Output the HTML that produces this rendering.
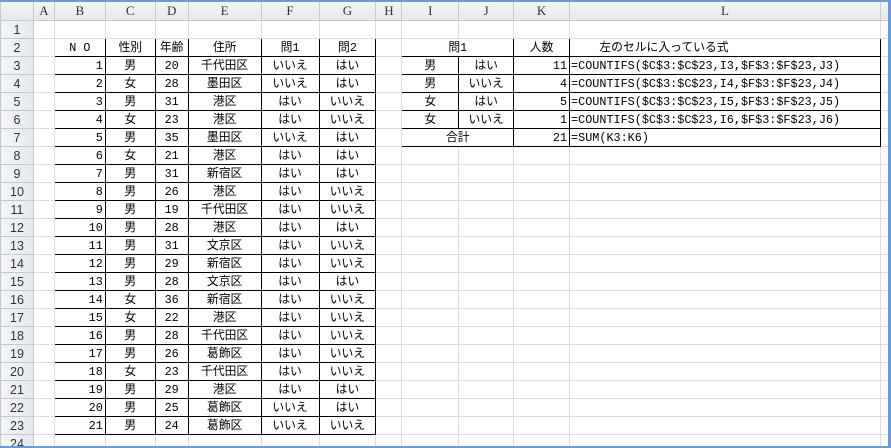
<!DOCTYPE html>
<html><head><meta charset="utf-8"><style>
*{margin:0;padding:0;box-sizing:border-box}
html,body{width:891px;height:448px;overflow:hidden}
body{background:#fff;position:relative;font-family:"Liberation Mono","Noto Sans CJK JP",monospace;font-size:11.8px;color:#000}
table{border-collapse:collapse;table-layout:fixed;position:absolute;left:0;top:0}
td{height:18px;border:1px solid #dadcdd;padding:0 2px;white-space:nowrap;overflow:hidden;line-height:16px;text-align:center}
tr.h td{height:20px;background:linear-gradient(#f4f6f8,#e4e8ed);border-color:#c5c9cf;color:#333;font-family:"Liberation Serif",serif;font-size:13px}
td.rh{background:linear-gradient(90deg,#f4f6f8,#e4e8ed);border-color:#c5c9cf;color:#333;text-align:center;font-family:"Liberation Sans",sans-serif;font-size:12.5px}
td.b{border:1px solid #000}
td.r{text-align:right}
td.l{text-align:left;padding-left:1px}
#frame{position:absolute;left:0;top:0;width:891px;height:448px;border-top:2px solid #6d9ad0;border-right:3px solid #6d9ad0;border-bottom:2px solid #6d9ad0;pointer-events:none}
</style></head><body>
<table>
<colgroup><col style="width:33px"><col style="width:21px"><col style="width:51px"><col style="width:50px"><col style="width:33px"><col style="width:73px"><col style="width:58px"><col style="width:57px"><col style="width:26px"><col style="width:57px"><col style="width:55px"><col style="width:56px"><col style="width:311px"><col style="width:10px"></colgroup>
<tr class="h"><td></td><td>A</td><td>B</td><td>C</td><td>D</td><td>E</td><td>F</td><td>G</td><td>H</td><td>I</td><td>J</td><td>K</td><td>L</td><td></td></tr>
<tr><td class="rh">1</td><td></td><td></td><td></td><td></td><td></td><td></td><td></td><td></td><td></td><td></td><td></td><td></td><td></td></tr>
<tr><td class="rh">2</td><td></td><td class="b">N O</td><td class="b">性別</td><td class="b">年齢</td><td class="b">住所</td><td class="b">問1</td><td class="b">問2</td><td></td><td class="b" colspan="2">問1</td><td class="b">人数</td><td class="b l">&nbsp;&nbsp;&nbsp;&nbsp;左のセルに入っている式</td><td></td></tr>
<tr><td class="rh">3</td><td></td><td class="b r">1</td><td class="b">男</td><td class="b">20</td><td class="b">千代田区</td><td class="b">いいえ</td><td class="b">はい</td><td></td><td class="b">男</td><td class="b">はい</td><td class="b r">11</td><td class="b l">=COUNTIFS($C$3:$C$23,I3,$F$3:$F$23,J3)</td><td></td></tr>
<tr><td class="rh">4</td><td></td><td class="b r">2</td><td class="b">女</td><td class="b">28</td><td class="b">墨田区</td><td class="b">いいえ</td><td class="b">はい</td><td></td><td class="b">男</td><td class="b">いいえ</td><td class="b r">4</td><td class="b l">=COUNTIFS($C$3:$C$23,I4,$F$3:$F$23,J4)</td><td></td></tr>
<tr><td class="rh">5</td><td></td><td class="b r">3</td><td class="b">男</td><td class="b">31</td><td class="b">港区</td><td class="b">はい</td><td class="b">いいえ</td><td></td><td class="b">女</td><td class="b">はい</td><td class="b r">5</td><td class="b l">=COUNTIFS($C$3:$C$23,I5,$F$3:$F$23,J5)</td><td></td></tr>
<tr><td class="rh">6</td><td></td><td class="b r">4</td><td class="b">女</td><td class="b">23</td><td class="b">港区</td><td class="b">はい</td><td class="b">いいえ</td><td></td><td class="b">女</td><td class="b">いいえ</td><td class="b r">1</td><td class="b l">=COUNTIFS($C$3:$C$23,I6,$F$3:$F$23,J6)</td><td></td></tr>
<tr><td class="rh">7</td><td></td><td class="b r">5</td><td class="b">男</td><td class="b">35</td><td class="b">墨田区</td><td class="b">いいえ</td><td class="b">はい</td><td></td><td class="b" colspan="2">合計</td><td class="b r">21</td><td class="b l">=SUM(K3:K6)</td><td></td></tr>
<tr><td class="rh">8</td><td></td><td class="b r">6</td><td class="b">女</td><td class="b">21</td><td class="b">港区</td><td class="b">はい</td><td class="b">はい</td><td></td><td></td><td></td><td></td><td></td><td></td></tr>
<tr><td class="rh">9</td><td></td><td class="b r">7</td><td class="b">男</td><td class="b">31</td><td class="b">新宿区</td><td class="b">はい</td><td class="b">はい</td><td></td><td></td><td></td><td></td><td></td><td></td></tr>
<tr><td class="rh">10</td><td></td><td class="b r">8</td><td class="b">男</td><td class="b">26</td><td class="b">港区</td><td class="b">はい</td><td class="b">いいえ</td><td></td><td></td><td></td><td></td><td></td><td></td></tr>
<tr><td class="rh">11</td><td></td><td class="b r">9</td><td class="b">男</td><td class="b">19</td><td class="b">千代田区</td><td class="b">はい</td><td class="b">いいえ</td><td></td><td></td><td></td><td></td><td></td><td></td></tr>
<tr><td class="rh">12</td><td></td><td class="b r">10</td><td class="b">男</td><td class="b">28</td><td class="b">港区</td><td class="b">はい</td><td class="b">はい</td><td></td><td></td><td></td><td></td><td></td><td></td></tr>
<tr><td class="rh">13</td><td></td><td class="b r">11</td><td class="b">男</td><td class="b">31</td><td class="b">文京区</td><td class="b">はい</td><td class="b">いいえ</td><td></td><td></td><td></td><td></td><td></td><td></td></tr>
<tr><td class="rh">14</td><td></td><td class="b r">12</td><td class="b">男</td><td class="b">29</td><td class="b">新宿区</td><td class="b">はい</td><td class="b">いいえ</td><td></td><td></td><td></td><td></td><td></td><td></td></tr>
<tr><td class="rh">15</td><td></td><td class="b r">13</td><td class="b">男</td><td class="b">28</td><td class="b">文京区</td><td class="b">はい</td><td class="b">はい</td><td></td><td></td><td></td><td></td><td></td><td></td></tr>
<tr><td class="rh">16</td><td></td><td class="b r">14</td><td class="b">女</td><td class="b">36</td><td class="b">新宿区</td><td class="b">はい</td><td class="b">いいえ</td><td></td><td></td><td></td><td></td><td></td><td></td></tr>
<tr><td class="rh">17</td><td></td><td class="b r">15</td><td class="b">女</td><td class="b">22</td><td class="b">港区</td><td class="b">はい</td><td class="b">いいえ</td><td></td><td></td><td></td><td></td><td></td><td></td></tr>
<tr><td class="rh">18</td><td></td><td class="b r">16</td><td class="b">男</td><td class="b">28</td><td class="b">千代田区</td><td class="b">はい</td><td class="b">いいえ</td><td></td><td></td><td></td><td></td><td></td><td></td></tr>
<tr><td class="rh">19</td><td></td><td class="b r">17</td><td class="b">男</td><td class="b">26</td><td class="b">葛飾区</td><td class="b">はい</td><td class="b">いいえ</td><td></td><td></td><td></td><td></td><td></td><td></td></tr>
<tr><td class="rh">20</td><td></td><td class="b r">18</td><td class="b">女</td><td class="b">23</td><td class="b">千代田区</td><td class="b">はい</td><td class="b">いいえ</td><td></td><td></td><td></td><td></td><td></td><td></td></tr>
<tr><td class="rh">21</td><td></td><td class="b r">19</td><td class="b">男</td><td class="b">29</td><td class="b">港区</td><td class="b">はい</td><td class="b">はい</td><td></td><td></td><td></td><td></td><td></td><td></td></tr>
<tr><td class="rh">22</td><td></td><td class="b r">20</td><td class="b">男</td><td class="b">25</td><td class="b">葛飾区</td><td class="b">いいえ</td><td class="b">はい</td><td></td><td></td><td></td><td></td><td></td><td></td></tr>
<tr><td class="rh">23</td><td></td><td class="b r">21</td><td class="b">男</td><td class="b">24</td><td class="b">葛飾区</td><td class="b">いいえ</td><td class="b">いいえ</td><td></td><td></td><td></td><td></td><td></td><td></td></tr>
<tr><td class="rh">24</td><td></td><td></td><td></td><td></td><td></td><td></td><td></td><td></td><td></td><td></td><td></td><td></td><td></td></tr>
</table>
<div id="frame"></div>
</body></html>
